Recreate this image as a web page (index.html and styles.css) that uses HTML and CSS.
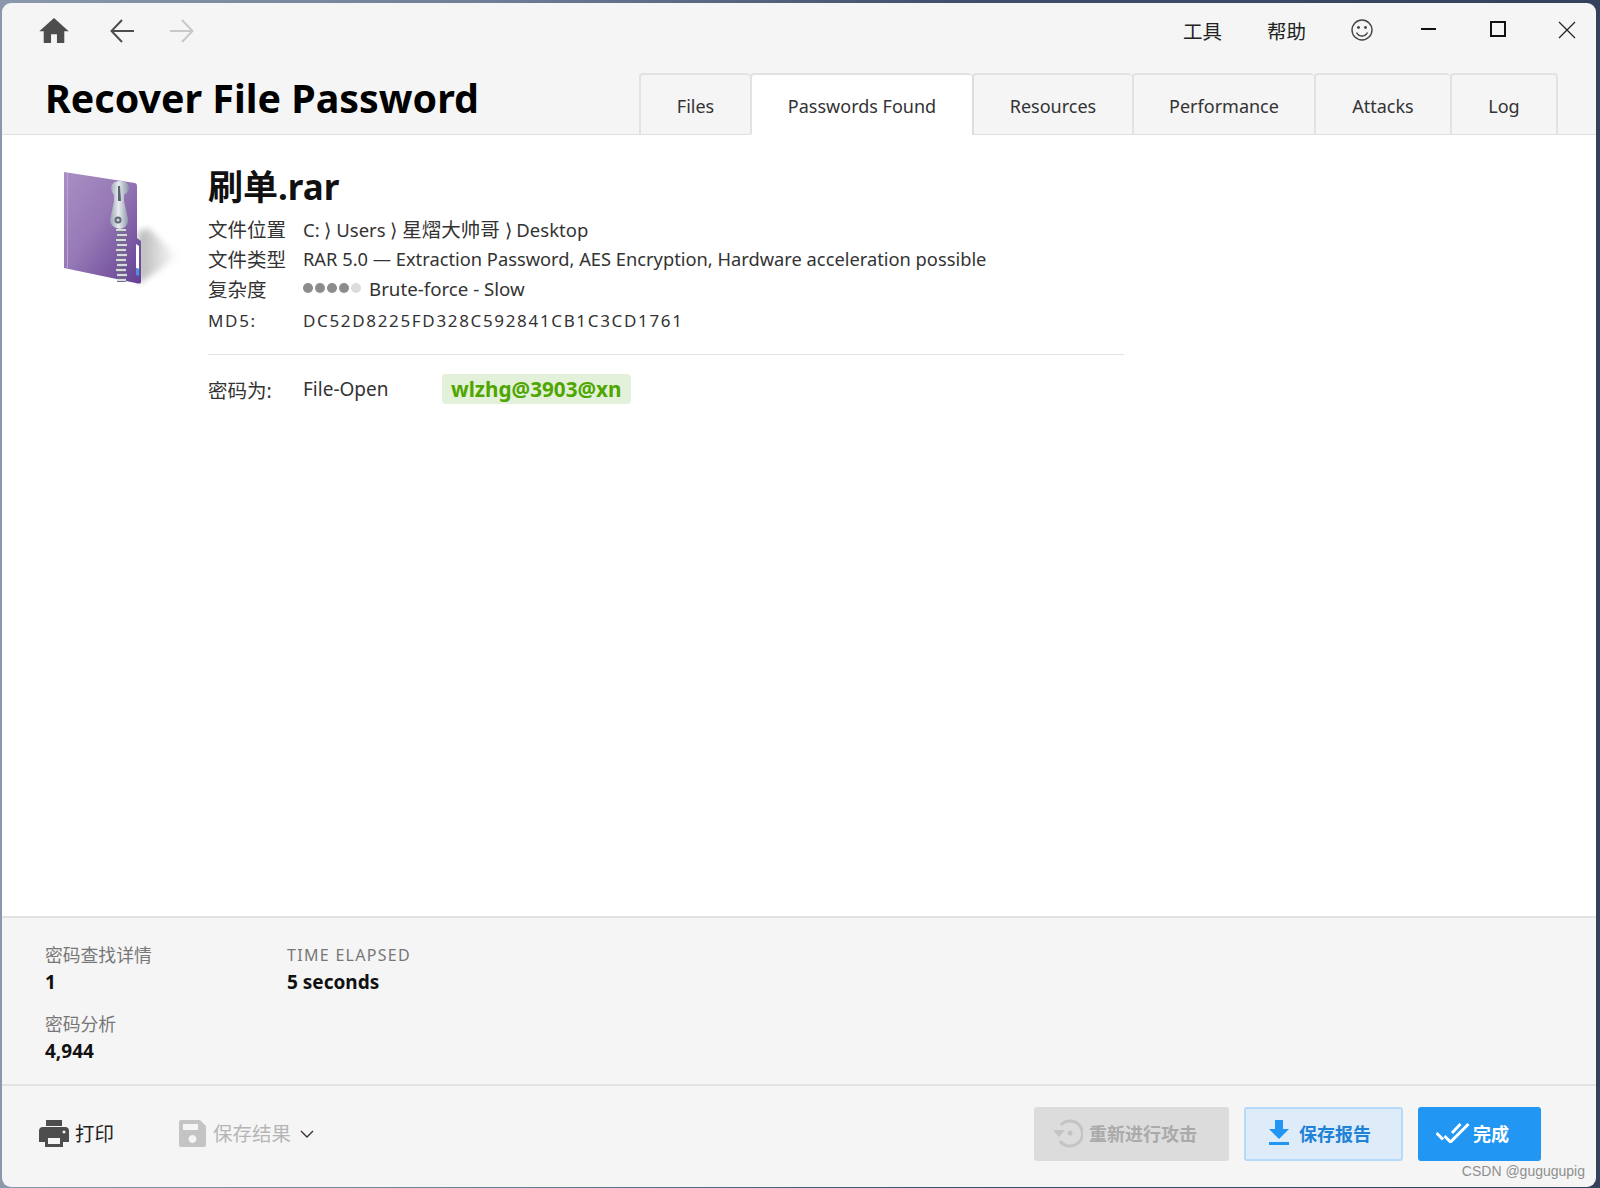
FILE: index.html
```html
<!DOCTYPE html>
<html lang="en">
<head>
    <meta charset="UTF-8">
    <title>Recover File Password</title>
    <link rel="stylesheet" href="styles.css">
</head>
<body>

    <div class="window">
        <!-- Nav and window controls -->
        <div class="topbar">
            <div class="nav">
                <svg class="icon-home" viewBox="2 3 20 17"><path d="M10 20v-6h4v6h5v-8h3L12 3 2 12h3v8z"/></svg>
                <svg class="icon-arrow" viewBox="0 0 24 24"><path d="M24 12H1.5M12 1 1.5 12 12 23"/></svg>
                <svg class="icon-arrow disabled" viewBox="0 0 24 24"><path d="M0 12h22.5M12 1l10.5 11L12 23"/></svg>
            </div>
            <div class="controls">
                <span class="menu-item">工具</span>
                <span class="menu-item">帮助</span>
                <svg class="icon-smile" viewBox="0 0 22 22">
                    <circle cx="11" cy="11" r="10"/>
                    <circle class="eye" cx="7.5" cy="8.5" r="1.4"/>
                    <circle class="eye" cx="14.5" cy="8.5" r="1.4"/>
                    <path d="M5.5 13.5c1.2 2.4 3.2 3.5 5.5 3.5s4.300-1.100 5.500-3.500"/>
                </svg>
                <svg class="win-btn" viewBox="0 0 16 16"><path class="thick" d="M0 8h15"/></svg>
                <svg class="win-btn win-max" viewBox="0 0 16 16"><path class="thick" d="M1 1h14v14H1z"/></svg>
                <svg class="win-btn close" viewBox="0 0 18 18"><path d="M1 1l16 16M17 1 1 17"/></svg>
            </div>
        </div>

        <!-- Title and tabs -->
        <div class="header">
            <h1 class="page-title">Recover File Password</h1>
            <div class="tabs">
                <div class="tab tab-files">Files</div>
                <div class="tab tab-found active">Passwords Found</div>
                <div class="tab tab-resources">Resources</div>
                <div class="tab tab-perf">Performance</div>
                <div class="tab tab-attacks">Attacks</div>
                <div class="tab tab-log">Log</div>
            </div>
        </div>

        <!-- File details -->
        <div class="main">
            <svg class="file-icon" viewBox="0 0 120 120">
                <defs>
                    <linearGradient id="folderFill" x1="0" y1="0" x2="1" y2="1">
                        <stop offset="0" stop-color="#a98fc4"/>
                        <stop offset="0.45" stop-color="#9679b6"/>
                        <stop offset="1" stop-color="#643e93"/>
                    </linearGradient>
                    <linearGradient id="shadowFill" x1="0" y1="0" x2="1" y2="0">
                        <stop offset="0" stop-color="#b5b5b5"/>
                        <stop offset="1" stop-color="#fff"/>
                    </linearGradient>
                    <linearGradient id="metal" x1="0" y1="0" x2="1" y2="0">
                        <stop offset="0" stop-color="#98a1b1"/>
                        <stop offset="0.45" stop-color="#e8ebf0"/>
                        <stop offset="1" stop-color="#8a93a5"/>
                    </linearGradient>
                    <filter id="soft"><feGaussianBlur stdDeviation="3"/></filter>
                </defs>
                <path fill="url(#shadowFill)" filter="url(#soft)" d="M78 114 118 87 88 58 78 62z"/>
                <path fill="url(#folderFill)" d="M4 2 75 13q2 .500 2 3V68l4 3v41q0 2-3 1.500L4 98z"/>
                <path fill="#b9a4d1" d="M7 3h1V98H7z"/>
                <path fill="#fff" d="M76 74l3 2V99l-3-1z"/>
                <path fill="#4f8fe0" d="M76 98l3 1v7l-3-1z"/>
                <path fill="none" stroke="#574a6e" stroke-width="4" d="M56 60h10M57 65h10M56 70h10M57 75h10M56 80h10M57 85h10M56 90h10M57 95h10M56 100h10M57 105h10M57 110h9"/>
                <path fill="none" stroke="#d5d9e0" stroke-width="2.400" d="M56 60h10M57 65h10M56 70h10M57 75h10M56 80h10M57 85h10M56 90h10M57 95h10M56 100h10M57 105h10M57 110h9"/>
                <path fill="url(#metal)" d="M51 17q1-6 9-6t9 6q0 5-5 8v6l4 18q0 9-8 10-9-1-10-9l4-19v-6q-3-3-3-9z"/>
                <path fill="#59626f" d="M58 16h2l1 15h-3z"/>
                <circle cx="58" cy="50" r="3.500" fill="#5f6879"/>
                <circle cx="58" cy="50" r="1.600" fill="#cfd4dc"/>
            </svg>
            <div class="file-info">
                <div class="file-name">刷单.rar</div>
                <div class="info-row"><span class="info-label">文件位置</span><span class="info-path">C: ⟩ Users ⟩ <span class="cjk">星熠大帅哥</span> ⟩ Desktop</span></div>
                <div class="info-row"><span class="info-label">文件类型</span><span class="info-long">RAR 5.0 — Extraction Password, AES Encryption, Hardware acceleration possible</span></div>
                <div class="info-row">
                    <span class="info-label">复杂度</span>
                    <span class="dots"><i></i><i></i><i></i><i></i><i class="off"></i></span>
                    <span class="info-brute">Brute-force - Slow</span>
                </div>
                <div class="info-row md5"><span class="info-label">MD5:</span><span>DC52D8225FD328C592841CB1C3CD1761</span></div>
                <div class="password-row">
                    <span class="info-label">密码为:</span>
                    <span class="password-type">File-Open</span>
                    <span class="password-pill">wlzhg@3903@xn</span>
                </div>
            </div>
        </div>

        <!-- Stats -->
        <div class="stats">
            <div class="stat">
                <div class="stat-label">密码查找详情</div>
                <div class="stat-value">1</div>
            </div>
            <div class="stat">
                <div class="stat-label spaced">TIME ELAPSED</div>
                <div class="stat-value">5 seconds</div>
            </div>
            <div class="stat">
                <div class="stat-label">密码分析</div>
                <div class="stat-value">4,944</div>
            </div>
        </div>

        <!-- Footer actions -->
        <div class="footer">
            <div class="footer-left">
                <div class="link-btn">
                    <svg class="icon-print" viewBox="0 0 30 27"><path fill-rule="evenodd" d="M7 0h16v6H7zM4 7h22q4 0 4 4v11h-6v5H6v-5H0V11q0-4 4-4zm5 11v6h12v-6zm16-7.500a1.500 1.500 0 1 0 .01 0z"/></svg>
                    <span class="link-text">打印</span>
                </div>
                <div class="link-btn disabled">
                    <svg class="icon-save" viewBox="0 0 27 27"><path fill-rule="evenodd" d="M2 0h19l6 6v19q0 2-2 2H2q-2 0-2-2V2q0-2 2-2zm2 4v6h15V4zm9.500 11a4 4 0 1 0 .01 0z"/></svg>
                    <span class="link-text">保存结果</span>
                    <svg class="icon-chevron" viewBox="0 0 14 8"><path d="M1 1l6 6 6-6"/></svg>
                </div>
            </div>
            <div class="footer-right">
                <button class="btn btn-retry">
                    <svg viewBox="0 0 30 30"><path d="M8 7a12.500 12.500 0 1 1-1 16" fill="none" stroke="#c4c4c4" stroke-width="3"/><path d="M0 12h12l-6 7z" fill="#c4c4c4"/><circle cx="17" cy="15" r="2.500" fill="#c4c4c4"/></svg>
                    重新进行攻击
                </button>
                <button class="btn btn-report">
                    <svg viewBox="0 0 20 25"><path d="M6 0h8v9h6L10 19 0 9h6zM0 22h20v3H0z" fill="#2196f3"/></svg>
                    保存报告
                </button>
                <button class="btn btn-done">
                    <svg viewBox="0 0 34 20"><path d="M.5 10 7 16.500M8.500 13l6 6L32.500 1M16 10l8.500-9" fill="none" stroke="#fff" stroke-width="3"/></svg>
                    完成
                </button>
            </div>
            <div class="watermark">CSDN @gugugupig</div>
        </div>
    </div>

</body>
</html>
```

FILE: styles.css
```css
/* Basic reset and desktop behind the window */
* {
    margin: 0;
    padding: 0;
    box-sizing: border-box;
}

body {
    height: 1188px;
    padding: 3px 4px 1px 2px;
    overflow: hidden;
    font-family: "Noto Sans", "Noto Sans CJK SC", sans-serif;
    color: #333;
    background: linear-gradient(90deg, #8b98ab 0%, #6f7f97 30%, #3f4f6b 60%, #33415c 100%);
}

/* Window */
.window {
    position: relative;
    display: flex;
    flex-direction: column;
    height: 100%;
    background-color: #f5f5f5;
    border-radius: 9px;
    overflow: hidden;
}

/* Top bar */
.topbar {
    display: flex;
    justify-content: space-between;
    height: 60px;
    padding: 15px 20px 0 37px;
    flex-shrink: 0;
}

.nav {
    display: flex;
    align-items: flex-start;
    gap: 36px;
}

.icon-home {
    width: 30px;
    height: 25px;
    margin-right: 5px;
    fill: #4d4d4d;
}

.icon-arrow {
    width: 24px;
    height: 24px;
    margin-top: 1px;
    fill: none;
    stroke: #4d4d4d;
    stroke-width: 2;
}

.icon-arrow.disabled {
    stroke: #c8c8c8;
}

.controls {
    display: flex;
    align-items: flex-start;
}

.menu-item {
    width: 84px;
    font-size: 19.5px;
    line-height: 28px;
    color: #222;
}

.icon-smile {
    width: 22px;
    height: 22px;
    margin-top: 1px;
    margin-right: 48px;
    fill: none;
    stroke: #444;
    stroke-width: 1.4;
}

.icon-smile .eye {
    fill: #444;
    stroke: none;
}

.win-btn {
    width: 16px;
    height: 16px;
    margin-top: 3px;
    margin-right: 53px;
    fill: none;
    stroke: #111;
    stroke-width: 1;
}

.win-btn .thick {
    stroke-width: 2;
}

.win-btn.win-max {
    margin-right: 52px;
}

.win-btn.close {
    width: 18px;
    height: 18px;
    margin-right: 0;
    stroke: #222;
    stroke-width: 1.2;
}

/* Title and tabs */
.header {
    display: flex;
    justify-content: space-between;
    align-items: flex-end;
    height: 72px;
    padding: 0 38px 0 43px;
    border-bottom: 1px solid #e0e0e0;
    flex-shrink: 0;
}

.page-title {
    align-self: center;
    margin-top: -2px;
    font-size: 39.4px;
    font-weight: 700;
    line-height: 56px;
    color: #000;
}

.tabs {
    display: flex;
    margin-bottom: -1px;
}

.tab {
    display: flex;
    justify-content: center;
    align-items: center;
    height: 62px;
    padding-top: 2px;
    font-size: 18px;
    color: #333;
    background-color: #f5f5f5;
    border: 2px solid #e2e2e2;
    border-bottom: 1px solid #e0e0e0;
    border-right: none;
    border-radius: 4px 4px 0 0;
}

.tab-log {
    border-right: 2px solid #e2e2e2;
}

.tab-files { width: 111px; }
.tab-found { width: 222px; }
.tab-resources { width: 160px; }
.tab-perf { width: 182px; }
.tab-attacks { width: 136px; }
.tab-log { width: 108px; }

.tab.active {
    background-color: #fff;
    border-bottom-color: #fff;
}

.tab.active + .tab {
    border-left-color: #dcdcdc;
}

/* File details */
.main {
    display: flex;
    flex: 1;
    padding: 35px 0 0 58px;
    background-color: #fff;
    border-bottom: 2px solid #e2e2e2;
}

.file-icon {
    width: 120px;
    height: 120px;
    flex-shrink: 0;
    margin-right: 28px;
}

.file-info {
    width: 916px;
    font-size: 19px;
}

.file-name {
    margin-top: -7px;
    margin-bottom: 2px;
    font-size: 35px;
    font-weight: 700;
    line-height: 48px;
    color: #111;
}

.info-row {
    display: flex;
    align-items: center;
    height: 30px;
    white-space: nowrap;
}

.info-label {
    width: 95px;
    flex-shrink: 0;
    font-size: 19.5px;
    color: #333;
}

.info-path {
    font-size: 18.5px;
}

.cjk {
    font-size: 19.5px;
}

.info-long {
    font-size: 18.3px;
}

.info-brute {
    font-size: 18.7px;
}

.dots {
    display: flex;
    gap: 2px;
    margin-right: 8px;
}

.dots i {
    width: 10px;
    height: 10px;
    border-radius: 50%;
    background-color: #8c8c8c;
}

.dots i.off {
    background-color: #dcdcdc;
}

.md5 {
    height: 34px;
    font-size: 17px;
    letter-spacing: 1.66px;
}

.md5 .info-label {
    font-size: 17px;
}

.password-row {
    display: flex;
    align-items: center;
    margin-top: 17px;
    padding-top: 19px;
    border-top: 1px solid #e2e2e2;
}

.password-type {
    width: 139px;
}

.password-pill {
    display: inline-block;
    padding: 0 9px;
    font-size: 20.7px;
    font-weight: 700;
    line-height: 30px;
    color: #4fa600;
    background-color: #e4f1da;
    border-radius: 4px;
}

/* Stats */
.stats {
    display: grid;
    grid-template-columns: 242px 1fr;
    align-content: start;
    row-gap: 15px;
    height: 168px;
    padding: 24px 0 0 43px;
    border-bottom: 2px solid #e2e2e2;
    flex-shrink: 0;
}

.stat-label {
    font-size: 17.8px;
    line-height: 26px;
    color: #777;
}

.stat-label.spaced {
    letter-spacing: 1.3px;
    font-size: 16px;
}

.stat-value {
    font-size: 19px;
    font-weight: 700;
    line-height: 28px;
    color: #111;
}

/* Footer */
.footer {
    position: relative;
    display: flex;
    justify-content: space-between;
    align-items: center;
    height: 101px;
    padding: 0 55px 6px 37px;
    flex-shrink: 0;
}

.footer-left {
    display: flex;
    align-items: center;
    gap: 65px;
}

.link-btn {
    display: flex;
    align-items: center;
    gap: 6px;
    font-size: 19.5px;
    color: #222;
}

.link-btn.disabled {
    gap: 7px;
    color: #b5b5b5;
}

.link-text {
    padding-bottom: 2px;
}

.icon-print {
    width: 30px;
    height: 27px;
    fill: #4d4d4d;
}

.icon-save {
    width: 27px;
    height: 27px;
    fill: #c4c4c4;
}

.icon-chevron {
    width: 14px;
    height: 8px;
    margin-left: 2px;
    fill: none;
    stroke: #333;
    stroke-width: 1.4;
}

.footer-right {
    display: flex;
    gap: 15px;
}

.btn {
    display: flex;
    justify-content: center;
    align-items: center;
    gap: 6px;
    height: 54px;
    padding-bottom: 2px;
    font-family: inherit;
    font-size: 18px;
    font-weight: 700;
    border: none;
    border-radius: 3px;
}

.btn-retry {
    width: 195px;
    padding-right: 13px;
    color: #aaa;
    background-color: #dcdcdc;
}

.btn-retry svg {
    width: 30px;
    height: 30px;
}

.btn-report {
    width: 159px;
    gap: 10px;
    padding-right: 7px;
    color: #1e82d8;
    background-color: #deecfa;
    border: 2px solid #b5dafc;
}

.btn-report svg {
    width: 20px;
    height: 25px;
}

.btn-done {
    width: 123px;
    gap: 3px;
    padding-right: 14px;
    color: #fff;
    background-color: #2196f3;
}

.btn-done svg {
    width: 34px;
    height: 20px;
}

/* Screenshot watermark */
.watermark {
    position: absolute;
    right: 11px;
    bottom: 8px;
    font-family: "Liberation Sans", sans-serif;
    font-size: 14px;
    color: #8f8f8f;
}
```
